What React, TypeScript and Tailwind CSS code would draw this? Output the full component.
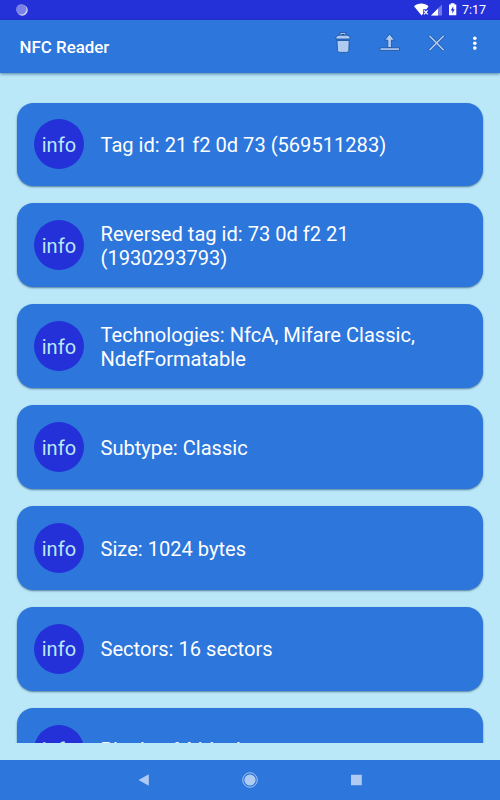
const items = [
  'Tag id: 21 f2 0d 73 (569511283)',
  'Reversed tag id: 73 0d f2 21 (1930293793)',
  'Technologies: NfcA, Mifare Classic, NdefFormatable',
  'Subtype: Classic',
  'Size: 1024 bytes',
  'Sectors: 16 sectors',
  'Blocks: 64 blocks',
];

function StatusBar() {
  return (
    <div className="flex h-5 shrink-0 items-center justify-between bg-[#2430d8] text-white">
      <svg className="ml-[15px]" width="14" height="14" viewBox="0 0 14 14">
        <circle cx="7.2" cy="7.2" r="5.5" fill="#d3d6f7" />
        <circle cx="6.3" cy="6.2" r="5.2" fill="#7b82e5" />
      </svg>
      <div className="flex items-center">
        <svg width="48" height="20" viewBox="0 0 48 20">
          <path d="M0 6.3C4 2.6 10.7 2.6 14.5 6.3L12.5 9.2H9.2V13.4L7.6 15.4Z" fill="white" />
          <path d="M10 10.4L13.7 14.3M13.7 10.4L10 14.3" stroke="white" strokeWidth="1.2" />
          <path d="M17 15.5L28 4.5V15.5Z" fill="#7279e5" />
          <path d="M17 15.5L24 8.5V15.5Z" fill="white" />
          <path d="M36.7 3.3H40.5V4.6H42.3V15.2H35V4.6H36.7Z" fill="white" />
          <path d="M39.3 6.3L36.7 10.4H38.3V13.5L40.7 9.3H39.3Z" fill="#2430d8" />
        </svg>
        <span className="mr-[14px] w-6 text-[12.5px] leading-5 whitespace-nowrap">7:17</span>
      </div>
    </div>
  );
}

function AppBar() {
  return (
    <header className="z-10 flex h-[53px] shrink-0 items-center justify-between bg-[#2c76dc] shadow-[0_1px_3px_rgba(0,40,80,0.55)]">
      <h1 className="pt-0.5 pl-[19.5px] text-[16.9px] font-medium text-white">NFC Reader</h1>
      <svg width="180" height="53" viewBox="320 20 180 53">
        <g fill="#b0cbf2" stroke="#174e9c" strokeWidth="0.8" strokeLinejoin="round">
          <path d="M337 40.5H349.2L348.8 50.5Q348.6 52.4 346.5 52.4H340Q337.8 52.4 337.5 50.5Z" />
          <path d="M340 35.5V32.6H345.8V35.5Z" />
          <path d="M336 39V37.3Q336.5 35.2 339.5 35.2H346.5Q349.5 35.2 350 37.3V39Z" />
          <path d="M389.6 34L394.6 40.2H391.4V47.5H387.8V40.2H384.6Z" />
          <path d="M380 47.8H399.5V50.4H380Z" />
        </g>
        <path d="M341.5 34.5H344.5" stroke="#174e9c" />
        <path d="M429.3 35.7L443.9 50.3M443.9 35.7L429.3 50.3" stroke="#174e9c" strokeWidth="2.7" />
        <path d="M429.5 35.9L443.7 50.1M443.7 35.9L429.5 50.1" stroke="#b0cbf2" strokeWidth="1.5" />
        <g fill="white">
          <circle cx="474.8" cy="38.3" r="1.8" />
          <circle cx="474.8" cy="43.2" r="1.8" />
          <circle cx="474.8" cy="48.1" r="1.8" />
        </g>
      </svg>
    </header>
  );
}

function InfoCard({ text }: { text: string }) {
  return (
    <li className="flex h-[83.9px] shrink-0 items-center gap-[16.5px] rounded-[16.5px] bg-[#2c76dc] px-[17px] shadow-[0_1px_2px_rgba(0,40,80,0.55)]">
      <span className="flex size-[50px] shrink-0 items-center justify-center rounded-full bg-[#2430d8] pt-px text-[20px] tracking-[0.1px] text-[#bae8f9]">
        info
      </span>
      <span className="w-[340px] pt-px text-[20.1px] leading-6 text-white">{text}</span>
    </li>
  );
}

function NavigationBar() {
  return (
    <nav className="flex h-10 shrink-0 bg-[#2c76dc]">
      <svg width="500" height="40" viewBox="0 0 500 40">
        <g fill="#b0cbf2">
          <path d="M138.5 20L148.8 14.2V25.8Z" />
          <circle cx="250" cy="20" r="5.6" />
          <circle cx="250" cy="20" r="7.3" fill="none" stroke="#b0cbf2" strokeWidth="0.9" />
          <rect x="351" y="14.7" width="10.8" height="10.5" rx="0.5" />
        </g>
      </svg>
    </nav>
  );
}

export default function App() {
  return (
    <div className="flex h-[800px] w-[500px] flex-col overflow-hidden bg-[#bae8f9] font-[Roboto,sans-serif]">
      <StatusBar />
      <AppBar />
      <main className="mb-[17px] min-h-0 flex-1 overflow-hidden px-[17px] pt-[29.5px]">
        <ul className="flex flex-col gap-[17px]">
          {items.map((item) => (
            <InfoCard key={item} text={item} />
          ))}
        </ul>
      </main>
      <NavigationBar />
    </div>
  );
}
